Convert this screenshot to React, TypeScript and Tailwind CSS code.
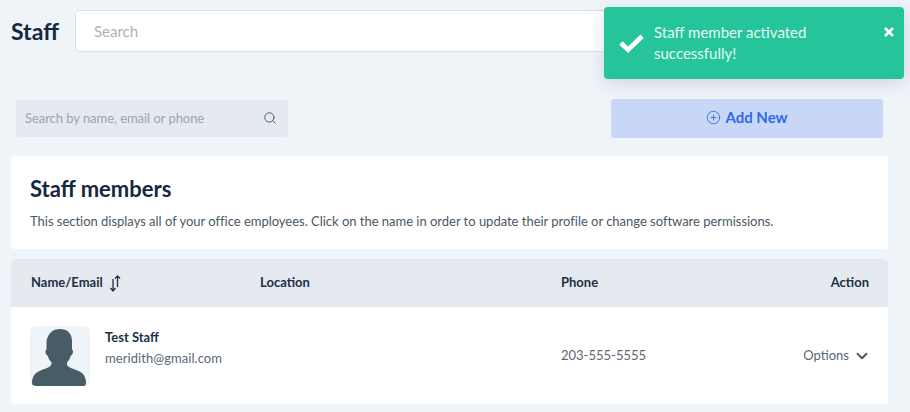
import React from 'react';
import { Search, CirclePlus, ChevronDown } from 'lucide-react';

const Avatar: React.FC = () => (
  <div className="w-[60px] h-[60px] rounded-md bg-[#eff4f9] overflow-hidden shrink-0">
    <svg viewBox="0 0 60 60" className="w-[60px] h-[60px]">
      <path
        fill="#485c67"
        d="M30 3c7.500 0 12 4.500 12 12v8.500c1 .5 1.200 2 .8 3.500-.4 1.500-1.100 2.500-2.100 2.800-.6 2.700-2 5-3.700 6.700-.2 2 .3 3.500 2 4.500 3 1.700 7.500 2.700 11.500 5 3 1.800 4.700 4.500 5.500 9 .2 2-.6 5.400-2 5.400H4c-1.500 0-2.200-3.200-2-5.400.8-4.500 2.500-7.200 5.500-9 4-2.300 8.500-3.300 11.500-5 1.700-1 2.700-2.500 2.500-4.500-1.700-1.700-3.100-4-3.700-6.700-1-.3-1.700-1.300-2.100-2.800-.4-1.500-.2-3 .8-3.500V15C18 7.500 22.500 3 30 3z"
      />
    </svg>
  </div>
);

const Toast: React.FC = () => (
  <div className="absolute left-[604px] top-[7px] w-[300px] h-[72px] rounded-sm bg-[#26c49a] shadow-[0_4px_16px_rgba(60,80,100,0.18)] flex text-white">
    <svg viewBox="0 0 26 20" className="w-[25px] h-[20px] ml-[15px] mt-[26px] shrink-0">
      <path d="M2 10 9.500 17 24 3" fill="none" stroke="#ffffff" strokeWidth="4.800" />
    </svg>
    <p className="ml-[10px] mt-[15px] w-[190px] text-[15px] leading-[21px] text-[#e4f9f3]">
      Staff member activated successfully!
    </p>
    <svg viewBox="0 0 10 10" className="absolute left-[280px] top-[20px] w-[10px] h-[10px]">
      <path d="M1 1 9 9M9 1 1 9" stroke="#ffffff" strokeWidth="2.600" fill="none" />
    </svg>
  </div>
);

const App: React.FC = () => {
  return (
    <div className="relative w-[910px] h-[412px] overflow-hidden bg-[#eff4f9] font-['Lato',sans-serif] text-[#15283f]">
      <header className="flex items-center pt-[10px] pl-[11px]">
        <h1 className="w-[64px] text-[23px] leading-[42px] font-bold text-[#15283f]">Staff</h1>
        <div className="w-[680px] h-[42px] px-[18px] flex items-center rounded-[5px] border border-[#dbe1e8] bg-white text-[15px] text-[#a9b2bc]">
          Search
        </div>
      </header>

      <div className="flex items-center justify-between mt-[47px] pl-[16px] pr-[27px]">
        <div className="w-[272px] h-[37px] px-[9px] flex items-center justify-between rounded-[4px] bg-[#e4eaf0] text-[13px] tracking-[-0.05px] text-[#9aa5b0]">
          <span>Search by name, email or phone</span>
          <Search size={14} strokeWidth={1.7} className="text-[#4e5d6b] mr-[2px] -mt-[1px]" />
        </div>
        <button className="w-[272px] h-[39px] pb-[2px] flex items-center justify-center gap-[4px] rounded-[3px] bg-[#c8d7f6] text-[15px] font-bold text-[#3268e8]">
          <CirclePlus size={15} strokeWidth={1.4} />
          Add New
        </button>
      </div>

      <section className="mt-[18px] ml-[11px] w-[877px] h-[93px] rounded-[4px] bg-white pl-[19px] pt-[20px]">
        <h2 className="text-[22px] leading-[26px] font-bold text-[#15283f]">Staff members</h2>
        <p className="mt-[11px] text-[13px] leading-[16px] tracking-[-0.02px] text-[#4a5866]">
          This section displays all of your office employees. Click on the name in order to update their profile or change software permissions.
        </p>
      </section>

      <section className="mt-[10px] ml-[11px] w-[877px] rounded-[4px] overflow-hidden bg-white">
        <div className="h-[48px] flex items-center bg-[#e4eaf0] text-[13px] font-bold text-[#1d2f45]">
          <div className="w-[249px] pl-[20px] flex items-center gap-[6px]">
            Name/Email
            <svg viewBox="0 0 12 17" className="w-[12px] h-[17px]">
              <path d="M4 4v12M1.500 13l2.500 3 2.500-3M8.500 12V1M6 3.500 8.500 1 11 3.500" fill="none" stroke="#1d2f45" strokeWidth="1.300" />
            </svg>
          </div>
          <div className="w-[301px]">Location</div>
          <div className="flex-1">Phone</div>
          <div className="pr-[19px]">Action</div>
        </div>
        <div className="h-[97px] flex items-center text-[13px]">
          <div className="w-[550px] pl-[19px] flex items-center gap-[15px]">
            <Avatar />
            <div className="-mt-[15px]">
              <div className="font-bold leading-[21px] text-[#1d2f45]">Test Staff</div>
              <div className="leading-[21px] tracking-[0.06px] text-[#5a6773]">meridith@gmail.com</div>
            </div>
          </div>
          <div className="flex-1 text-[#5a6773]">203-555-5555</div>
          <div className="pr-[17px] flex items-center gap-[4px] text-[#5a6773]">
            Options
            <ChevronDown size={18} strokeWidth={2.6} className="text-[#4a5866]" />
          </div>
        </div>
      </section>

      <Toast />
    </div>
  );
};

export default App;
